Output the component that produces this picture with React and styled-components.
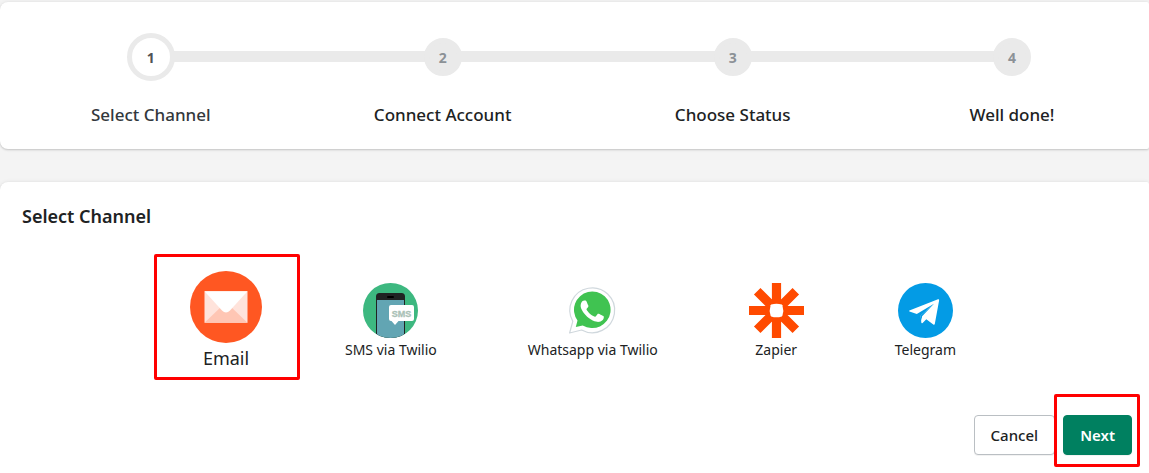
import { useState } from "react";
import styled, { createGlobalStyle } from "styled-components";

const steps = ["Select Channel", "Connect Account", "Choose Status", "Well done!"];

const channels = [
    { id: "email", label: "Email", Icon: EmailIcon },
    { id: "sms", label: "SMS via Twilio", Icon: SmsIcon },
    { id: "whatsapp", label: "Whatsapp via Twilio", Icon: WhatsappIcon },
    { id: "zapier", label: "Zapier", Icon: ZapierIcon },
    { id: "telegram", label: "Telegram", Icon: TelegramIcon },
];

export default function App() {

    const [selected, setSelected] = useState("email");

    return (
        <Page>
            <GlobalStyle />
            <StepsCard>
                <Steps>
                    {steps.map((step, index) => (
                        <Step key={step}>
                            <CircleArea>
                                <Circle $active={index === 0}>{index + 1}</Circle>
                            </CircleArea>
                            <StepLabel $active={index === 0}>{step}</StepLabel>
                        </Step>
                    ))}
                </Steps>
            </StepsCard>
            <ChannelCard>
                <Title>Select Channel</Title>
                <Channels>
                    {channels.map(({ id, label, Icon }) => (
                        <Channel key={id} type="button" $selected={id === selected} onClick={() => setSelected(id)}>
                            <Icon />
                            <span>{label}</span>
                            {id === selected && <Highlight $inset="-17px -38px -7px -36px" />}
                        </Channel>
                    ))}
                </Channels>
                <Actions>
                    <Button type="button">Cancel</Button>
                    <NextArea>
                        <Button type="button" $primary>Next</Button>
                        <Highlight $inset="-21px -8px -12px -9px" />
                    </NextArea>
                </Actions>
            </ChannelCard>
        </Page>
    )
}

function EmailIcon() {
    return (
        <svg viewBox="0 0 72 72" aria-hidden="true">
            <circle cx="36" cy="36" r="36" fill="#ff5722" />
            <path d="M14.5 20.3h43v31.4h-43z" fill="#ffe3db" />
            <path d="M14.5 51.7 33 34h6l18.5 17.7z" fill="#ffc6b4" />
            <path d="M14.5 20.3h43L40 39.6c-2.6 2.6-5.4 2.6-8 0z" fill="#fff" />
        </svg>
    )
}

function SmsIcon() {
    return (
        <svg viewBox="0 0 55 55" aria-hidden="true">
            <clipPath id="sms-circle">
                <circle cx="27.5" cy="27.5" r="27.5" />
            </clipPath>
            <g clipPath="url(#sms-circle)">
                <path d="M0 0h55v55H0z" fill="#3db880" />
                <path d="M13 56V13.5a3.5 3.5 0 0 1 3.5-3.5h22a3.5 3.5 0 0 1 3.5 3.5V56z" fill="#202323" />
                <path d="M14 17h27v39H14z" fill="#62a5b3" />
                <rect x="24" y="13" width="7" height="2" rx="1" fill="#000" />
            </g>
            <path d="M28 22h21a2 2 0 0 1 2 2v12a2 2 0 0 1-2 2H35.5l-3.5 4-3.5-4H28a2 2 0 0 1-2-2V24a2 2 0 0 1 2-2z" fill="#fff" />
            <text x="38.5" y="33.5" textAnchor="middle" fontFamily="Liberation Sans, sans-serif" fontSize="9" fontWeight="700" fill="#a9c1b6" stroke="#a9c1b6" strokeWidth="0.3">SMS</text>
        </svg>
    )
}

function WhatsappIcon() {
    return (
        <svg viewBox="0 0 55 55" aria-hidden="true">
            <path d="M4.6 50 7.8 38.4A22.4 22.4 0 1 1 16.6 47z" fill="#fff" stroke="#d0d8dd" strokeWidth="1.2" strokeLinejoin="round" />
            <path d="M10.8 44 12.5 37.6A18.3 18.3 0 1 1 17.7 42.4z" fill="#40c351" />
            <path transform="translate(4.1 5.1) scale(1.92)" fill="#fff" d="M17.472 14.382c-.297-.149-1.758-.867-2.03-.967-.273-.099-.471-.148-.67.15-.197.297-.767.966-.94 1.164-.173.199-.347.223-.644.075-.297-.15-1.255-.463-2.39-1.475-.883-.788-1.48-1.761-1.653-2.059-.173-.297-.018-.458.13-.606.134-.133.298-.347.446-.52.149-.174.198-.298.298-.497.099-.198.05-.371-.025-.52-.075-.149-.669-1.612-.916-2.207-.242-.579-.487-.5-.669-.51-.173-.008-.371-.01-.57-.01-.198 0-.52.074-.792.372-.272.297-1.04 1.016-1.04 2.479 0 1.462 1.065 2.875 1.213 3.074.149.198 2.096 3.2 5.077 4.487.709.306 1.262.489 1.694.625.712.227 1.36.195 1.871.118.571-.085 1.758-.719 2.006-1.413.248-.694.248-1.289.173-1.413-.074-.124-.272-.198-.57-.347" />
        </svg>
    )
}

function ZapierIcon() {
    return (
        <svg viewBox="0 0 55 55" aria-hidden="true">
            <path d="M27.5 0v55M0 27.5h55M8.2 8.2l38.6 38.6M46.8 8.2 8.2 46.8" stroke="#ff4a00" strokeWidth="9.2" />
            <path d="M22.2 21.6q5.3-1.8 10.6 0l.6.6q1.8 5.3 0 10.6l-.6.6q-5.3 1.8-10.6 0l-.6-.6q-1.8-5.3 0-10.6z" fill="#fff" />
        </svg>
    )
}

function TelegramIcon() {
    return (
        <svg viewBox="0 0 55 55" aria-hidden="true">
            <circle cx="27.5" cy="27.5" r="27.5" fill="#039be5" />
            <path d="M11.4 27.6 40 16.3q1.3-.4 1.1 1.2L36.8 41q-.4 1.2-1.5.5l-7-5.3-3.7 3.7q-1 .8-1.3-.3l-.6-7.2L36 20.8 18.8 31l-7.3-2.5q-.9-.5-.1-.9z" fill="#fff" />
            <path d="m23.6 37.5.5-4.3L36 20.8 22.7 32.4z" fill="#039be5" />
        </svg>
    )
}

const GlobalStyle = createGlobalStyle`
    * {
        box-sizing: border-box;
    }

    body {
        margin: 0;
        background: #f4f4f4;
        color: #202223;
        font-family: 'Segoe UI', 'Noto Sans', sans-serif;
    }
`;

const Page = styled.main`
    min-height: 100vh;
    padding-top: 2px;
    display: flex;
    flex-direction: column;
    gap: 33px;
`;

const Card = styled.section`
    background: #fff;
    box-shadow: 0 0 4px rgba(23, 24, 24, 0.08), 0 1px 2px rgba(0, 0, 0, 0.16);
`;

const StepsCard = styled(Card)`
    padding: 31px 79px 20px 91px;
    border-radius: 8px 2px 2px 8px;
`;

const ChannelCard = styled(Card)`
    flex: 1;
    padding: 20px 17px 18px 22px;
    border-radius: 8px 2px 0 0;
`;

const Steps = styled.ol`
    position: relative;
    margin: 0;
    padding: 0;
    display: flex;
    justify-content: space-between;
    list-style: none;

    &::before {
        content: '';
        position: absolute;
        top: 18px;
        left: 58px;
        right: 58px;
        height: 11px;
        background: #eaeaea;
    }
`;

const Step = styled.li`
    position: relative;
    min-width: 116px;
    display: flex;
    flex-direction: column;
    align-items: center;
    gap: 20px;
`;

const CircleArea = styled.div`
    height: 48px;
    display: flex;
    align-items: center;
`;

const Circle = styled.span`
    width: ${({ $active }) => $active ? '48px' : '38px'};
    height: ${({ $active }) => $active ? '48px' : '38px'};
    display: flex;
    justify-content: center;
    align-items: center;
    border: 5px solid #eaeaea;
    border-radius: 50%;
    background: ${({ $active }) => $active ? '#fff' : '#eaeaea'};
    color: ${({ $active }) => $active ? '#4f5356' : '#8c9196'};
    font-size: 14px;
    font-weight: 700;
`;

const StepLabel = styled.span`
    color: ${({ $active }) => $active ? '#33383c' : '#202223'};
    font-size: 17px;
    font-weight: 500;
    line-height: 28px;
`;

const Title = styled.h2`
    margin: 0;
    font-size: 18px;
    font-weight: 600;
    line-height: 28px;
`;

const Channels = styled.div`
    padding: 41px 176px 42px 176px;
    display: flex;
    justify-content: space-between;
    align-items: center;
`;

const Channel = styled.button`
    position: relative;
    margin: ${({ $selected }) => $selected ? '0 -8px' : '0'};
    padding: 0;
    display: flex;
    flex-direction: column;
    align-items: center;
    border: none;
    background: none;
    color: #202223;
    font-family: inherit;
    font-size: ${({ $selected }) => $selected ? '18px' : '14px'};
    line-height: ${({ $selected }) => $selected ? '30px' : '24px'};
    white-space: nowrap;
    cursor: pointer;

    svg {
        width: ${({ $selected }) => $selected ? '72px' : '55px'};
        height: ${({ $selected }) => $selected ? '72px' : '55px'};
    }
`;

const Highlight = styled.span`
    position: absolute;
    inset: ${({ $inset }) => $inset};
    border: 3px solid #ff0000;
    border-radius: 2px;
    pointer-events: none;
`;

const Actions = styled.div`
    display: flex;
    justify-content: flex-end;
    gap: 8px;
`;

const NextArea = styled.div`
    position: relative;
`;

const Button = styled.button`
    height: 40px;
    padding: 0 16px;
    border: 1px solid ${({ $primary }) => $primary ? '#008060' : '#babfc3'};
    border-radius: 4px;
    background: ${({ $primary }) => $primary ? '#008060' : '#fff'};
    box-shadow: 0 1px 0 rgba(0, 0, 0, 0.05);
    color: ${({ $primary }) => $primary ? '#fff' : '#202223'};
    font-family: inherit;
    font-size: 15px;
    font-weight: ${({ $primary }) => $primary ? '600' : '500'};
    cursor: pointer;
`;
